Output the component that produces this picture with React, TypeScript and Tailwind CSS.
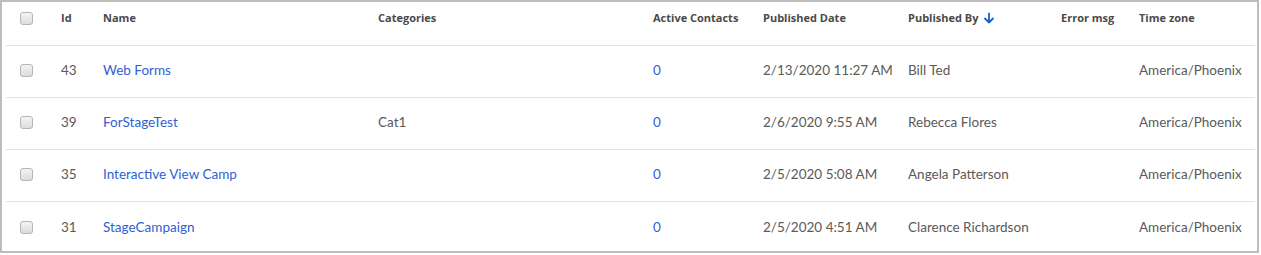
import React from "react";

const rows = [
  { id: 43, name: "Web Forms", cat: "", contacts: "0", date: "2/13/2020 11:27 AM", by: "Bill Ted", tz: "America/Phoenix" },
  { id: 39, name: "ForStageTest", cat: "Cat1", contacts: "0", date: "2/6/2020 9:55 AM", by: "Rebecca Flores", tz: "America/Phoenix" },
  { id: 35, name: "Interactive View Camp", cat: "", contacts: "0", date: "2/5/2020 5:08 AM", by: "Angela Patterson", tz: "America/Phoenix" },
  { id: 31, name: "StageCampaign", cat: "", contacts: "0", date: "2/5/2020 4:51 AM", by: "Clarence Richardson", tz: "America/Phoenix" },
];

const cols = "grid grid-cols-[55px_42px_275px_275px_110px_145px_153px_78px_116px]";

function Checkbox() {
  return (
    <div className="ml-[14px] h-[13px] w-[13px] rounded-[3px] border border-[#b5b5b5] bg-gradient-to-b from-[#f4f4f4] to-[#dcdcdc]" />
  );
}

export default function App() {
  return (
    <div className="bg-white" style={{ fontFamily: "Lato, 'Open Sans', sans-serif" }}>
      <div className="box-border h-[253px] w-[1259px] border-2 border-[#bdbdbd] bg-white pl-1 pr-[2px]">
        <div
          className={`${cols} h-[44px] items-start border-b border-[#e3e3e3] pt-[8px] text-[11px] font-bold text-[#4a4a4a]`}
          style={{ fontFamily: "'Open Sans', Lato, sans-serif" }}
        >
          <div className="pt-[2px]"><Checkbox /></div>
          <div className="leading-[16px]">Id</div>
          <div className="leading-[16px]">Name</div>
          <div className="leading-[16px]">Categories</div>
          <div className="leading-[16px]">Active Contacts</div>
          <div className="leading-[16px]">Published Date</div>
          <div className="flex items-center gap-[5px] leading-[16px]">
            Published By
            <svg width="12" height="12" viewBox="0 0 12 12" fill="none" stroke="#1e5fd6" strokeWidth="1.8" strokeLinecap="round" strokeLinejoin="round">
              <path d="M6 1.5v9M2 6.5l4 4 4-4" />
            </svg>
          </div>
          <div className="leading-[16px]">Error msg</div>
          <div className="leading-[16px]">Time zone</div>
        </div>
        {rows.map((r, i) => (
          <div
            key={r.id}
            className={`${cols} h-[52px] items-center pb-[2px] text-[13.5px] text-[#5a5a5a] ${i < rows.length - 1 ? "border-b border-[#e3e3e3]" : ""}`}
          >
            <div><Checkbox /></div>
            <div>{r.id}</div>
            <div className="text-[#2f5fd6]">{r.name}</div>
            <div>{r.cat}</div>
            <div className="text-[#2f5fd6]">{r.contacts}</div>
            <div>{r.date}</div>
            <div>{r.by}</div>
            <div></div>
            <div>{r.tz}</div>
          </div>
        ))}
      </div>
    </div>
  );
}
